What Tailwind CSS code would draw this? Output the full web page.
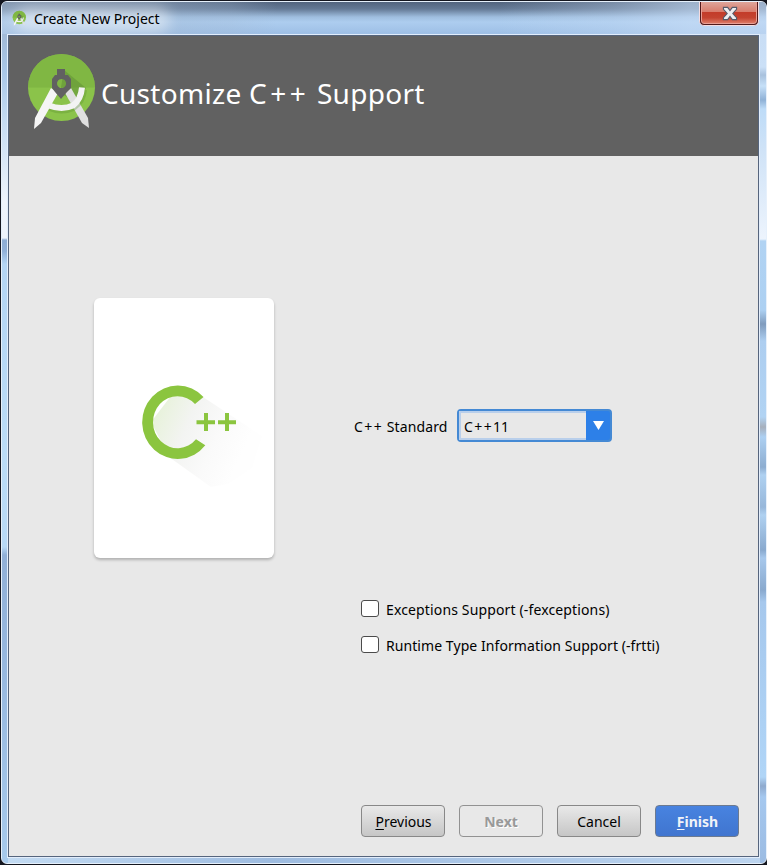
<!DOCTYPE html>
<html lang="en">
<head>
<meta charset="utf-8">
<title>Create New Project</title>
<script src="https://cdn.jsdelivr.net/npm/@tailwindcss/browser@4"></script>
</head>
<body class="w-[767px] h-[865px] overflow-hidden bg-[#14161f] font-['Noto_Sans','Open_Sans',sans-serif] text-[14px] text-black">
<svg class="absolute w-0 h-0">
  <defs>
    <symbol id="studio" viewBox="0 0 85 95">
      <circle cx="41.500" cy="42.500" r="33.500" fill="#8bc34a"/>
      <path d="M8 42.500a33.500 33.500 0 0 1 67 0z" fill="#7cb342" opacity=".75"/>
      <path d="M44 25l22 18-8 15-18-10z" fill="#5e8d35" opacity=".5"/>
      <path d="M45 48l6-5 17 30 1 10-7-5z" fill="#e0e0e0"/>
      <path d="M30 62q12 5 23 0 9-6 10-17" fill="none" stroke="#558b2f" stroke-opacity=".3" stroke-width="8"/>
      <path d="M31 43l7 5-17 30-7 6 1-11z" fill="#f5f5f5"/>
      <path d="M29 60.500q13 5 24 0 8-6 9-18" fill="none" stroke="#f3f3f3" stroke-width="6"/>
      <path d="M37 24h8v6h3l3 4v9l-4 4-6 7-6-7-3-4v-9l3-4h2zM41.500 34a4.500 4.500 0 1 0 .1 0z" fill="#616161" fill-rule="evenodd"/>
    </symbol>
    <linearGradient id="shade" gradientUnits="userSpaceOnUse" x1="22" y1="35" x2="112" y2="75"><stop stop-color="#e6f2d8"/><stop offset=".38" stop-color="#f3f4f2"/><stop offset=".7" stop-color="#fafafa"/><stop offset="1" stop-color="#fefefe"/></linearGradient>
  </defs>
</svg>
<div class="w-[766px] h-[863px] mt-px ml-px rounded-[6px] border border-[#e6f0fb] overflow-hidden flex flex-col bg-[linear-gradient(90deg,#c4dcf3,#9ebce0_35%,#bdd5ef)] relative">
  <div class="absolute inset-y-0 left-0 w-[6px] bg-[linear-gradient(180deg,#9aaec8_0,#a9c7e8_70px,#c6dcf3_120px,#eef4fc_200px,#edf3fb_236px,#8eadd4_238px,#91b0d7_249px,#b4d5f4_262px,#bbdcf7_450px,#b8d9f6_545px,#91b0d7_553px,#98b9e0_680px,#a7caec_860px)]"></div>
  <div class="absolute inset-y-0 right-0 w-[6px] bg-[linear-gradient(180deg,#c6dbf3_0,#cbe0f7_65px,#a8c1dd_73px,#c6e0f8_84px,#8fb1d6_98px,#bedcf8_107px,#d0e3f7_150px,#edf4fd_237px,#b1d3f3_239px,#acd0f2_308px,#7f9bbd_322px,#adcef0_339px,#b1d3f3_415px,#a6afbc_425px,#add0f2_435px,#8dadd0_465px,#afd1f1_473px,#97b7da_505px,#afd1f1_513px,#89a9ce_548px,#a7c8ec_556px,#89a9ce_588px,#a6c8ed_600px,#b0d5f7_775px,#8faace_784px,#a5c8ef_795px,#9bbbe2_862px)]"></div>
  <header class="relative h-[32px] shrink-0 flex items-center pl-[9px] bg-[linear-gradient(180deg,#52647e_0,#647995_7px,#9fbedf_15px,#adcdef_20px,#9fc0e6_31px)]">
    <div class="absolute inset-0 bg-[linear-gradient(90deg,#b9cde480_0,#a3b9d366_20%,#a3b9d340_30%,transparent_36%,transparent_65%,#c5dbf455_80%,#c9def7a0_90%)]"></div>
    <div class="absolute left-[12px] top-[5px] w-[156px] h-[26px] rounded-full bg-white/45 blur-[7px]"></div>
    <svg class="relative w-[17px] h-[19px]"><use href="#studio"/></svg>
    <h1 class="relative ml-[6px] mt-px text-[14px] leading-5 whitespace-nowrap tracking-[0.02px]">Create New Project</h1>
    <button aria-label="Close" class="absolute right-[7px] -top-px w-[60px] h-[25px] rounded-b-[5px] border border-t-0 border-[#f5dce0] bg-[#51191a] p-px pt-0">
      <span class="flex items-center justify-center w-full h-full rounded-b-[3px] border border-[#e99e94] bg-[linear-gradient(180deg,#dfa59a_0,#d87b6b_48%,#c33c2a_50%,#c44330_75%,#dc7763)]">
        <svg class="ml-[2px] mt-px" width="16" height="15" viewBox="0 0 17 16"><path d="M1.500 1.500h4.500l2.500 3.300L11 1.500h4.500v2L11.500 8l4 4.500v2H11l-2.500-3.300L6 14.500H1.500v-2l4-4.500-4-4.500z" fill="#eeeef0" stroke="#555b6b" stroke-width="1.200"/></svg>
      </span>
    </button>
  </header>
  <main class="relative w-[753px] h-[824px] ml-[5px] border border-[#e2edfb] flex flex-col">
    <div class="flex-1 border border-[#56657d] bg-[#e8e8e8] flex flex-col">
      <div class="h-[120px] shrink-0 bg-[#616161] flex items-start">
        <svg class="ml-[11px] mt-[9px] w-[85px] h-[95px] shrink-0"><use href="#studio"/></svg>
        <h2 class="-ml-[4px] mt-[37px] text-[28px] leading-10 text-white whitespace-nowrap tracking-[0.3px]">Customize <span class="tracking-[3.5px]">C++</span> Support</h2>
      </div>
      <div class="flex h-[649px]">
        <section class="w-[266px] pl-[85px] pt-[142px]">
          <div class="w-[180px] h-[260px] rounded-[6px] bg-white shadow-[0_2px_3px_rgba(0,0,0,0.24)]">
            <svg class="ml-[37px] block" width="140" height="200" viewBox="0 -78 140 200">
              <path d="M72 21L131 60L121 92L97 108L80 111L38 81L20 46L43 16z" fill="url(#shade)"/>
              <path d="M72.500 21A35.500 36.700 0 1 0 74.300 69.300L65 63.200A24.500 26 0 1 1 64 28z" fill="#8bc53f"/>
              <path d="M65.500 46.300h18.500M75 37v18M87 46.300h18M96 37v18" stroke="#8bc53f" stroke-width="4"/>
            </svg>
          </div>
        </section>
        <section class="flex-1 pl-[79px] pt-[253px]">
          <div class="flex items-center h-[34px]">
            <label class="w-[103px] shrink-0 whitespace-nowrap tracking-[0.1px]"><span class="tracking-[1.4px]">C++</span> Standard</label>
            <div class="w-[155px] h-[33px] -mt-px rounded-[4px] border-2 border-[#4489d4] bg-[#2d80e8] flex">
              <div class="w-[127px] h-full bg-[#e8e8e8] border-2 border-r-0 border-[#b9cfeb] pl-[3px] pt-px flex items-center"><span><span class="tracking-[1.4px]">C++</span>11</span></div>
              <div class="flex-1 flex items-center justify-center"><svg width="11" height="9"><path d="M0 0h11L5.500 9z" fill="white"/></svg></div>
            </div>
          </div>
          <div class="pl-[7px] pt-[156px] flex flex-col gap-[16px]">
            <div class="flex items-center h-5 gap-[7px] whitespace-nowrap tracking-[0.14px]"><span class="w-[18px] h-[17px] mb-[2px] rounded-[3px] border border-[#4b4b4b] bg-white shrink-0"></span>Exceptions Support (-fexceptions)</div>
            <div class="flex items-center h-5 gap-[7px] whitespace-nowrap tracking-[0.07px]"><span class="w-[18px] h-[17px] mb-[2px] rounded-[3px] border border-[#4b4b4b] bg-white shrink-0"></span>Runtime Type Information Support (-frtti)</div>
          </div>
        </section>
      </div>
      <footer class="flex justify-end gap-[14px] pr-[19px]">
        <button class="w-[84px] h-[32px] rounded-[4px] border border-[#888] bg-linear-to-b from-[#e9e9e9] to-[#c6c6c6] pt-px pl-px"><span class="underline underline-offset-2">P</span>revious</button>
        <button class="w-[84px] h-[32px] rounded-[4px] border border-[#929292] pt-px font-bold text-[#999] [text-shadow:1px_1px_white]">Next</button>
        <button class="w-[84px] h-[32px] rounded-[4px] border border-[#888] bg-linear-to-b from-[#e9e9e9] to-[#c6c6c6] pt-px">Cancel</button>
        <button class="w-[84px] h-[32px] rounded-[4px] border border-[#6c7a90] bg-linear-to-b from-[#4883e0] to-[#4075cf] pt-px pl-px font-bold text-[#f0f3f8]"><span class="underline underline-offset-2">F</span>inish</button>
      </footer>
    </div>
  </main>
</div>
</body>
</html>
